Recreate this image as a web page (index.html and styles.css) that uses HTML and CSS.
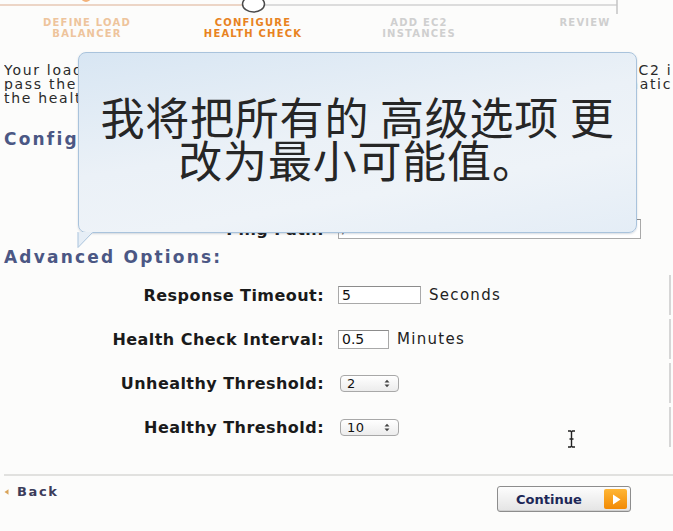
FILE: index.html
```html
<!DOCTYPE html>
<html>
<head>
<meta charset="utf-8">
<link rel="stylesheet" href="styles.css">
</head>
<body>
<div class="page">
  <header class="wizard">
    <svg class="track" width="673" height="14" viewBox="0 0 673 14">
      <ellipse cx="86" cy="-3" rx="5" ry="5" fill="#f3b27a"/>
      <line x1="0" y1="5" x2="243" y2="5" stroke="#ecd5c6" stroke-width="2"/>
      <line x1="264" y1="5" x2="617" y2="5" stroke="#d2d2d2" stroke-width="1.5"/>
      <line x1="617" y1="0" x2="617" y2="14" stroke="#c4c4c4" stroke-width="1.5"/>
      <ellipse cx="253.5" cy="4" rx="11" ry="8" fill="#fff" stroke="#4a4a4a" stroke-width="1.5"/>
    </svg>
    <ol class="steps">
      <li class="step done">DEFINE LOAD<br>BALANCER</li>
      <li class="step current">CONFIGURE<br>HEALTH CHECK</li>
      <li class="step">ADD EC2<br>INSTANCES</li>
      <li class="step">REVIEW</li>
    </ol>
  </header>

  <div class="intro">
    <div class="pline"><span class="pl w1">Your load balancer will automatically perform health checks on your</span><span class="pr">EC2 instances</span></div>
    <div class="pline"><span class="pl w2">pass the health check. If an instance fails the health check, it is</span><span class="pr">automatically removed</span></div>
    <div class="pline"><span class="pl">the health check to meet your specific needs.</span></div>
  </div>

  <h2 class="section-title config-title">Configuration Options:</h2>
  <div class="config-rows">
    <div class="frow small">
      <label class="flabel">Ping Protocol:</label>
      <div class="fctl"><span class="select sel-wide"><span>HTTP</span></span></div>
    </div>
    <div class="frow small path-row">
      <label class="flabel">Ping Path:</label>
      <div class="fctl"><span class="input path-input">/index.html</span></div>
    </div>
  </div>

  <h2 class="section-title adv-title">Advanced Options:</h2>
  <div class="adv-rows">
    <div class="frow adv">
      <label class="flabel">Response Timeout:</label>
      <div class="fctl"><span class="input in-timeout">5</span><span class="unit">Seconds</span></div>
    </div>
    <div class="frow adv">
      <label class="flabel">Health Check Interval:</label>
      <div class="fctl"><span class="input in-interval">0.5</span><span class="unit">Minutes</span></div>
    </div>
    <div class="frow adv">
      <label class="flabel">Unhealthy Threshold:</label>
      <div class="fctl"><span class="select"><span>2</span><svg class="updown" width="6" height="9" viewBox="0 0 6 9"><path d="M0.5 3.5 L3 0.8 L5.5 3.5 Z M0.5 5.5 L3 8.2 L5.5 5.5 Z" fill="#444"/></svg></span></div>
    </div>
    <div class="frow adv">
      <label class="flabel">Healthy Threshold:</label>
      <div class="fctl"><span class="select"><span>10</span><svg class="updown" width="6" height="9" viewBox="0 0 6 9"><path d="M0.5 3.5 L3 0.8 L5.5 3.5 Z M0.5 5.5 L3 8.2 L5.5 5.5 Z" fill="#444"/></svg></span></div>
    </div>
  </div>

  <footer class="actions">
    <a class="back"><svg width="5" height="6" viewBox="0 0 5 6"><path d="M4.5 0.3 L0.5 3 L4.5 5.7 Z" fill="#d9a45a"/></svg>Back</a>
    <button class="continue"><span class="cont-label">Continue</span><span class="cont-icon"><svg width="9" height="11" viewBox="0 0 9 11"><path d="M1 0.5 L8.5 5.5 L1 10.5 Z" fill="#fff"/></svg></span></button>
  </footer>
</div>

<div class="callout">
  <p class="callout-text">我将把所有的 <span class="em">高级选项</span> 更<br>改为最小可能值。</p>
  <svg class="callout-tail" width="18" height="17" viewBox="0 0 18 17"><path d="M1 0 L1 15.5 L16 0" fill="#e6eef6" stroke="#a9c3dc" stroke-width="1"/><rect x="1.5" y="-1" width="14" height="1.6" fill="#e6eef6"/></svg>
</div>

<svg class="ibeam" width="9" height="18" viewBox="0 0 9 18"><path d="M1 1 H3.5 L4.5 2 L5.5 1 H8 M4.5 2 V16 M1 17 H3.5 L4.5 16 L5.5 17 H8 M2.5 9 H6.5" fill="none" stroke="#222" stroke-width="1.4"/></svg>
</body>
</html>
```

FILE: styles.css
```css
html, body {
  margin: 0;
  padding: 0;
  background: #fcfcfb;
}
body {
  width: 673px;
  height: 531px;
  overflow: hidden;
  position: relative;
  font-family: "DejaVu Sans", "Liberation Sans", sans-serif;
  color: #1c1c1c;
}
.page {
  padding: 0 2px 0 4px;
}

/* wizard header */
.wizard {
  margin-left: -4px;
}
.track {
  display: block;
}
.steps {
  list-style: none;
  margin: 3px 0 0 4px;
  padding: 0;
  display: flex;
}
.step {
  width: 166px;
  flex: none;
  text-align: center;
  font-size: 10px;
  line-height: 11px;
  font-weight: bold;
  letter-spacing: 1.2px;
  color: #cfcfcf;
}
.step.done { color: #eec49c; }
.step.current { color: #e8831f; }

/* intro paragraph */
.intro {
  margin-top: 24px;
  font-size: 14px;
  line-height: 14px;
  letter-spacing: 1.7px;
  color: #2a2a2a;
}
.pline {
  display: flex;
  white-space: nowrap;
  overflow: hidden;
}
.pl {
  flex: none;
  overflow: hidden;
}
.pl.w1 { width: 624px; }
.pl.w2 { width: 582px; }
.pr { flex: none; }

/* section headings */
.section-title {
  margin: 0;
  font-size: 17px;
  line-height: 22px;
  font-weight: bold;
  letter-spacing: 2.2px;
  color: #4b5784;
}
.config-title { margin-top: 23px; }
.adv-title { margin-top: 3px; }

/* form rows */
.config-rows {
  margin-top: 23px;
  display: flex;
  flex-direction: column;
  gap: 20px;
}
.frow {
  display: grid;
  grid-template-columns: 320px 1fr;
  column-gap: 14px;
  align-items: center;
}
.frow.small { height: 24px; }
.path-row { margin-bottom: 2px; }
.flabel {
  text-align: right;
  font-size: 16px;
  font-weight: bold;
  letter-spacing: 0.45px;
  color: #1a1a1a;
  white-space: nowrap;
}
.fctl {
  display: flex;
  align-items: center;
}
.adv-rows {
  margin-top: 7px;
  display: flex;
  flex-direction: column;
  gap: 4px;
}
.frow.adv {
  height: 40px;
  border-right: 2px solid #d6d6d6;
}

.input {
  box-sizing: border-box;
  display: inline-block;
  height: 18px;
  border: 1px solid #a9a9a9;
  border-top-color: #8c8c8c;
  background: #fff;
  font-size: 14px;
  line-height: 16px;
  padding-left: 3px;
  color: #111;
}
.in-timeout { width: 83px; }
.in-interval { width: 51px; height: 19px; }
.path-input { width: 303px; height: 20px; color: #555; }
.unit {
  margin-left: 8px;
  font-size: 15px;
  letter-spacing: 1.3px;
  color: #222;
}

.select {
  box-sizing: border-box;
  width: 59px;
  height: 17px;
  margin-left: 2px;
  border: 1px solid #a8a8a8;
  border-radius: 4px;
  background: linear-gradient(#ffffff, #ececec);
  display: inline-flex;
  align-items: center;
  justify-content: space-between;
  padding: 0 8px 0 6px;
  font-size: 13px;
  letter-spacing: 0.5px;
  color: #111;
}
.sel-wide { width: 80px; }
.updown { display: block; }

/* footer */
.actions {
  margin-top: 27px;
  border-top: 2px solid #e1e1df;
  margin-right: -2px;
  display: flex;
  justify-content: space-between;
  align-items: flex-start;
  padding-right: 42px;
}
.back {
  margin-top: 8px;
  display: flex;
  align-items: center;
  gap: 8px;
  font-size: 13px;
  line-height: 16px;
  font-weight: bold;
  letter-spacing: 1.6px;
  color: #3c3c5a;
}
.back svg { display: block; }
.continue {
  margin-top: 10px;
  box-sizing: border-box;
  width: 134px;
  height: 26px;
  border: 1px solid #8d8d8d;
  border-radius: 3px;
  background: linear-gradient(#fdfdfd, #e4e4e4);
  box-shadow: inset 0 -1px 0 #d0d0d0;
  display: flex;
  align-items: center;
  justify-content: space-between;
  padding: 0 3px 0 18px;
  font-family: "DejaVu Sans", sans-serif;
  font-size: 13px;
  font-weight: bold;
  color: #1d2757;
}
.cont-icon {
  width: 23px;
  height: 20px;
  border-radius: 2px;
  background: linear-gradient(#ffb635, #f28a04);
  display: flex;
  align-items: center;
  justify-content: center;
}
.cont-icon svg { display: block; margin-left: 2px; }

/* callout overlay */
.callout {
  position: absolute;
  left: 78px;
  top: 52px;
  width: 559px;
  height: 181px;
  box-sizing: border-box;
  border: 1px solid #a9c3dc;
  border-radius: 8px;
  background: linear-gradient(170deg, #d8e6f3 0%, #ebf1f7 45%, #eef3f8 70%, #e4edf6 100%);
  box-shadow: 0 1px 2px rgba(90, 110, 140, 0.25);
}
.callout-text {
  margin: 0;
  padding-top: 42px;
  text-align: center;
  font-family: "Noto Sans CJK SC", sans-serif;
  font-size: 44px;
  line-height: 43px;
  letter-spacing: 0.8px;
  font-weight: 400;
  color: #262626;
}
.callout-tail {
  position: absolute;
  left: -2px;
  top: 179px;
  display: block;
}

.ibeam {
  position: absolute;
  left: 567px;
  top: 430px;
}
```
